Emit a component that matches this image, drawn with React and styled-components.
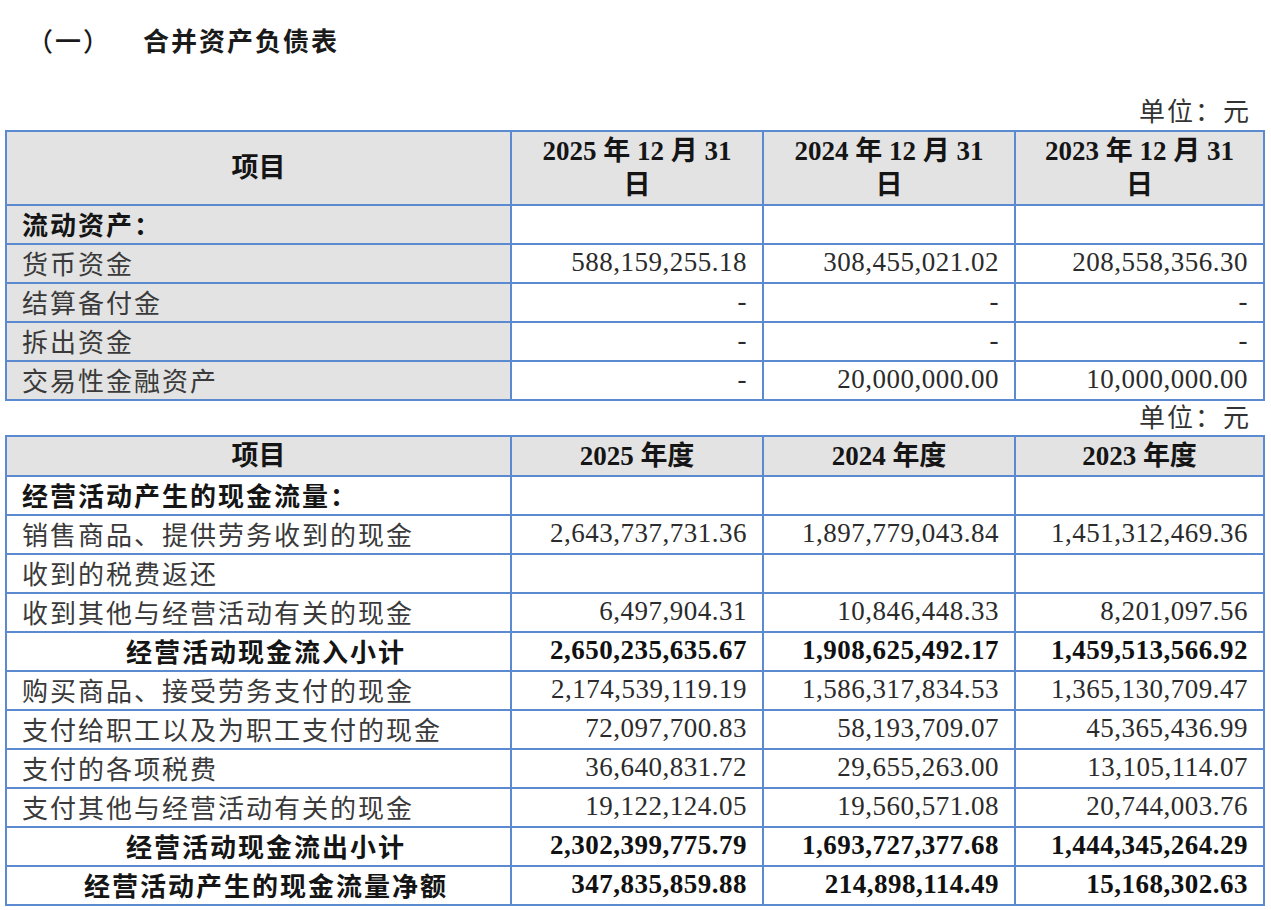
import React from "react";
import styled, { createGlobalStyle } from "styled-components";

const GlobalStyle = createGlobalStyle`
  html, body {
    margin: 0;
    padding: 0;
    background: #fff;
  }
  body {
    font-family: "Liberation Serif", "Noto Sans CJK SC", serif;
    color: #2b2b2b;
  }
`;

const balanceRows = [
  { label: "流动资产：", section: true, values: ["", "", ""] },
  { label: "货币资金", values: ["588,159,255.18", "308,455,021.02", "208,558,356.30"] },
  { label: "结算备付金", values: ["-", "-", "-"] },
  { label: "拆出资金", values: ["-", "-", "-"] },
  { label: "交易性金融资产", values: ["-", "20,000,000.00", "10,000,000.00"] },
];

const cashRows = [
  { label: "经营活动产生的现金流量：", section: true, values: ["", "", ""] },
  { label: "销售商品、提供劳务收到的现金", values: ["2,643,737,731.36", "1,897,779,043.84", "1,451,312,469.36"] },
  { label: "收到的税费返还", values: ["", "", ""] },
  { label: "收到其他与经营活动有关的现金", values: ["6,497,904.31", "10,846,448.33", "8,201,097.56"] },
  { label: "经营活动现金流入小计", total: true, values: ["2,650,235,635.67", "1,908,625,492.17", "1,459,513,566.92"] },
  { label: "购买商品、接受劳务支付的现金", values: ["2,174,539,119.19", "1,586,317,834.53", "1,365,130,709.47"] },
  { label: "支付给职工以及为职工支付的现金", values: ["72,097,700.83", "58,193,709.07", "45,365,436.99"] },
  { label: "支付的各项税费", values: ["36,640,831.72", "29,655,263.00", "13,105,114.07"] },
  { label: "支付其他与经营活动有关的现金", values: ["19,122,124.05", "19,560,571.08", "20,744,003.76"] },
  { label: "经营活动现金流出小计", total: true, values: ["2,302,399,775.79", "1,693,727,377.68", "1,444,345,264.29"] },
  { label: "经营活动产生的现金流量净额", total: true, values: ["347,835,859.88", "214,898,114.49", "15,168,302.63"] },
];

const Columns = () => (
  <colgroup>
    <col style={{ width: 505 }} />
    <col style={{ width: 252 }} />
    <col style={{ width: 252 }} />
    <col style={{ width: 249 }} />
  </colgroup>
);

const App = () => {
  return (
    <>
      <GlobalStyle />
      <Page>
        <Title>
          <span className="num">（一）</span>
          <span>合并资产负债表</span>
        </Title>

        <Unit>单位：元</Unit>
        <Table>
          <Columns />
          <thead>
            <HeadRow $tall>
              <HeadCell>项目</HeadCell>
              <HeadCell>2025 年 12 月 31<br />日</HeadCell>
              <HeadCell>2024 年 12 月 31<br />日</HeadCell>
              <HeadCell>2023 年 12 月 31<br />日</HeadCell>
            </HeadRow>
          </thead>
          <tbody>
            {balanceRows.map((row) => (
              <Row key={row.label}>
                <LabelCell $shaded $bold={row.section}>{row.label}</LabelCell>
                {row.values.map((v, i) => (
                  <NumCell key={i}>{v}</NumCell>
                ))}
              </Row>
            ))}
          </tbody>
        </Table>

        <Unit $tight>单位：元</Unit>
        <Table>
          <Columns />
          <thead>
            <HeadRow>
              <HeadCell>项目</HeadCell>
              <HeadCell>2025 年度</HeadCell>
              <HeadCell>2024 年度</HeadCell>
              <HeadCell>2023 年度</HeadCell>
            </HeadRow>
          </thead>
          <tbody>
            {cashRows.map((row) => (
              <Row key={row.label}>
                <LabelCell $bold={row.section || row.total} $center={row.total}>
                  {row.label}
                </LabelCell>
                {row.values.map((v, i) => (
                  <NumCell key={i} $bold={row.total}>{v}</NumCell>
                ))}
              </Row>
            ))}
          </tbody>
        </Table>
      </Page>
    </>
  );
};

export default App;

const Page = styled.div`
  width: 1271px;
  padding-left: 5px;
  box-sizing: border-box;
`;

const Title = styled.div`
  height: 78px;
  display: flex;
  align-items: center;
  gap: 32px;
  padding-left: 22px;
  font-family: "Noto Sans CJK SC", sans-serif;
  font-size: 26px;
  font-weight: 700;
  letter-spacing: 2px;
  color: #1a1a1a;

  .num {
    font-weight: 500;
  }
`;

const Unit = styled.div`
  width: 1258px;
  margin-top: ${(p) => (p.$tight ? "0" : "12px")};
  height: ${(p) => (p.$tight ? "34px" : "40px")};
  line-height: ${(p) => (p.$tight ? "30px" : "40px")};
  text-align: right;
  padding-right: 12px;
  box-sizing: border-box;
  font-family: "Noto Sans CJK SC", sans-serif;
  font-size: 26px;
  letter-spacing: 2px;
  color: #333;
`;

const Table = styled.table`
  width: 1258px;
  table-layout: fixed;
  border-collapse: collapse;
  border: 2px solid #5b8ad0;
`;

const HeadRow = styled.tr`
  height: ${(p) => (p.$tall ? "74px" : "40px")};
  background: #e3e3e3;
`;

const HeadCell = styled.th`
  border: 2px solid #5b8ad0;
  padding: 0 8px;
  text-align: center;
  vertical-align: middle;
  font-family: "Liberation Serif", "Noto Sans CJK SC", serif;
  font-size: 27px;
  font-weight: 700;
  line-height: 34px;
  color: #151515;
`;

const Row = styled.tr`
  height: 39px;
`;

const LabelCell = styled.td`
  border: 2px solid #5b8ad0;
  padding: 0 0 2px 15px;
  background: ${(p) => (p.$shaded ? "#e3e3e3" : "#fff")};
  text-align: ${(p) => (p.$center ? "center" : "left")};
  font-family: "Noto Sans CJK SC", sans-serif;
  font-size: 26px;
  font-weight: ${(p) => (p.$bold ? 700 : 400)};
  letter-spacing: 2px;
  line-height: 33px;
  color: ${(p) => (p.$bold ? "#151515" : "#3a3a3a")};
  white-space: nowrap;
  overflow: hidden;
`;

const NumCell = styled.td`
  border: 2px solid #5b8ad0;
  padding: 0 15px 2px 0;
  background: #fff;
  text-align: right;
  font-family: "Liberation Serif", serif;
  font-size: 27px;
  font-weight: ${(p) => (p.$bold ? 700 : 400)};
  letter-spacing: 0.5px;
  line-height: 33px;
  color: ${(p) => (p.$bold ? "#111" : "#2b2b2b")};
  white-space: nowrap;
`;
